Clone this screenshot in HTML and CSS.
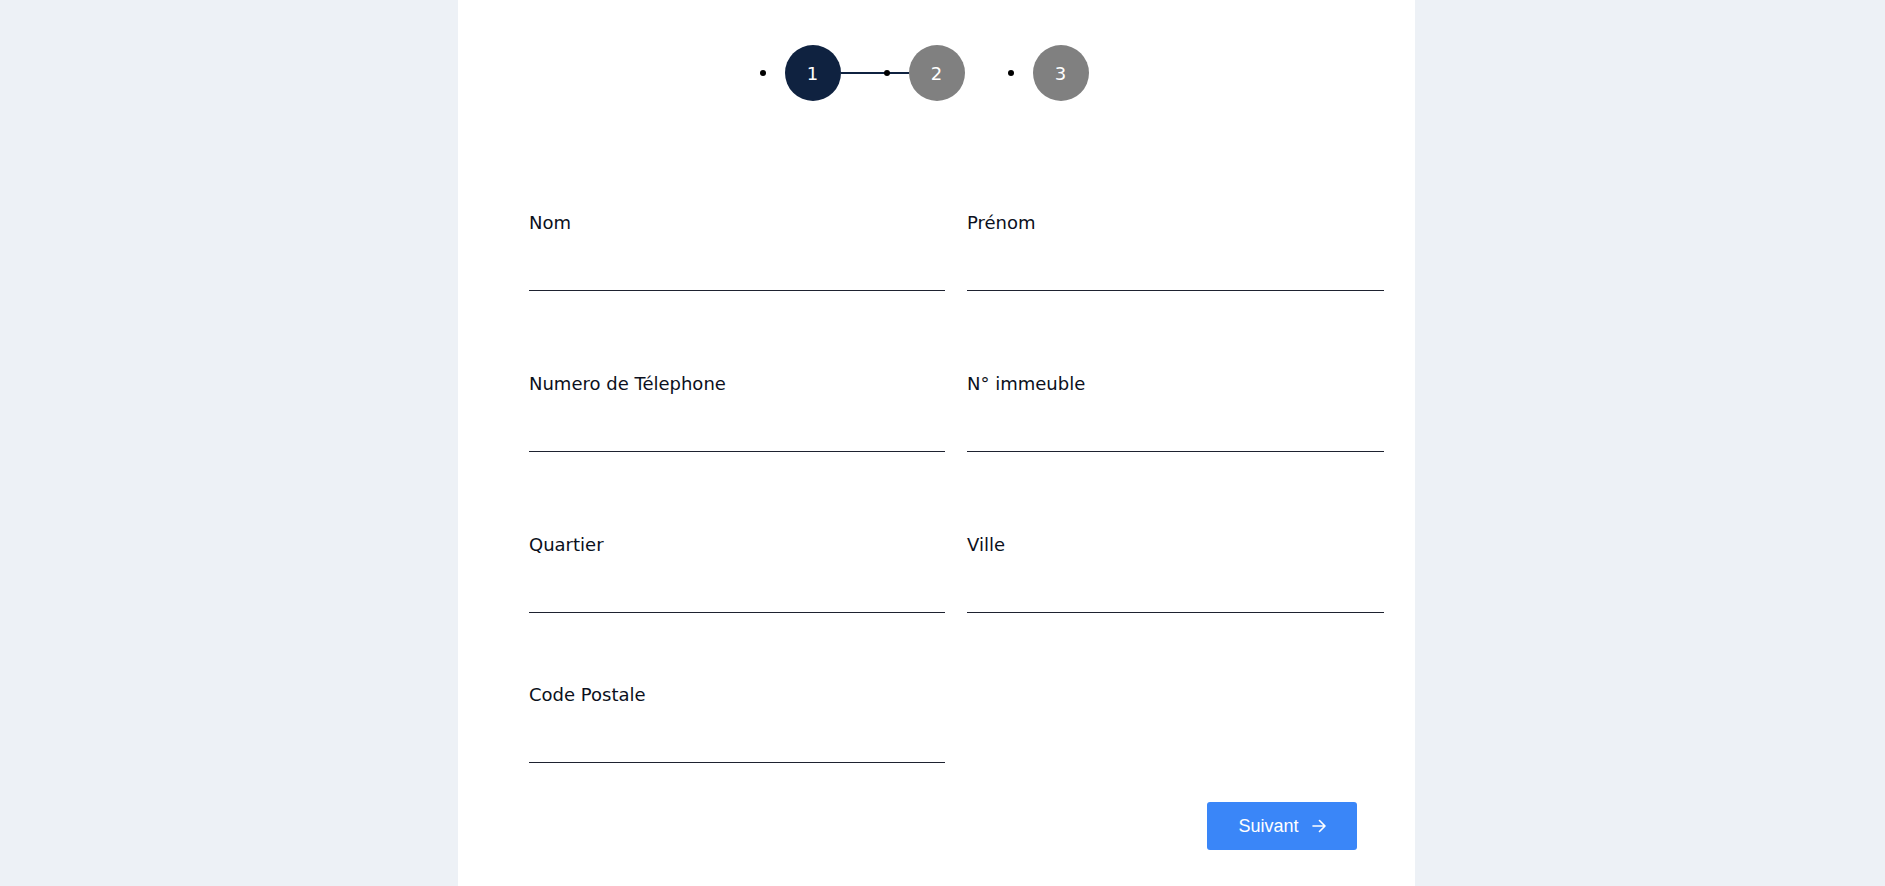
FILE: index.html
```html
<!DOCTYPE html>
<html lang="fr">
<head>
<meta charset="utf-8">
<title>Inscription</title>
<link rel="stylesheet" href="styles.css">
</head>
<body>
<main class="panel">
  <ol class="stepper">
    <li class="step active"><span class="circle">1</span></li>
    <li class="step"><span class="circle">2</span></li>
    <li class="step"><span class="circle">3</span></li>
  </ol>
  <form class="form">
    <div class="grid">
      <div class="field"><label class="label">Nom</label><input class="input" type="text"></div>
      <div class="field"><label class="label">Prénom</label><input class="input" type="text"></div>
      <div class="field"><label class="label">Numero de Télephone</label><input class="input" type="text"></div>
      <div class="field"><label class="label">N° immeuble</label><input class="input" type="text"></div>
      <div class="field"><label class="label">Quartier</label><input class="input" type="text"></div>
      <div class="field"><label class="label">Ville</label><input class="input" type="text"></div>
    </div>
    <div class="grid last">
      <div class="field"><label class="label">Code Postale</label><input class="input" type="text"></div>
    </div>
    <div class="actions">
      <button class="btn" type="button">Suivant
        <svg class="arrow" width="14" height="14" viewBox="0 0 14 14" fill="none" stroke="#fff" stroke-width="1.6" stroke-linecap="round" stroke-linejoin="round"><path d="M1 7h12M7.5 1.5 13 7l-5.5 5.5"/></svg>
      </button>
    </div>
  </form>
</main>
</body>
</html>
```

FILE: styles.css
```css
html, body {
  margin: 0;
  padding: 0;
  height: 100%;
}
body {
  background: #edf1f6;
  font-family: "DejaVu Sans", "Noto Sans", sans-serif;
  color: #0d1321;
}
.panel {
  margin-left: 458px;
  width: 957px;
  min-height: 886px;
  background: #fff;
  box-sizing: border-box;
  padding-top: 45px;
}
.stepper {
  list-style: none;
  margin: 0;
  padding: 0;
  display: flex;
  justify-content: center;
  gap: 68px;
}
.step {
  position: relative;
  width: 56px;
  height: 56px;
}
.step::before {
  content: "";
  position: absolute;
  left: -25px;
  top: 25px;
  width: 6px;
  height: 6px;
  border-radius: 50%;
  background: #000;
  z-index: 2;
}
.step.active::after {
  content: "";
  position: absolute;
  left: 56px;
  top: 27px;
  width: 68px;
  height: 2px;
  background: #0f2240;
  z-index: 1;
}
.circle {
  display: flex;
  align-items: center;
  justify-content: center;
  width: 56px;
  height: 56px;
  border-radius: 50%;
  background: #808080;
  color: #fff;
  font-size: 18px;
}
.step.active .circle {
  background: #0f2240;
}
.form {
  padding: 110px 31px 0 71px;
}
.grid {
  display: grid;
  grid-template-columns: 416px 417px;
  column-gap: 22px;
  row-gap: 81px;
}
.grid.last {
  margin-top: 70px;
}
.field {
  display: flex;
  flex-direction: column;
}
.label {
  font-size: 18px;
  line-height: 24px;
  color: #0b1020;
}
.input {
  display: block;
  width: 100%;
  height: 56px;
  box-sizing: border-box;
  border: none;
  border-bottom: 1px solid #1e2230;
  outline: none;
  background: transparent;
  padding: 0;
  font: inherit;
}
.actions {
  display: flex;
  justify-content: flex-end;
  padding-right: 27px;
  margin-top: 39px;
}
.btn {
  display: flex;
  align-items: center;
  justify-content: center;
  gap: 13px;
  width: 150px;
  height: 48px;
  border: none;
  border-radius: 3px;
  background: #3a86f8;
  color: #fff;
  font-family: "Liberation Sans", Arial, sans-serif;
  font-size: 18px;
  padding: 0;
}
.arrow {
  display: block;
}
```
